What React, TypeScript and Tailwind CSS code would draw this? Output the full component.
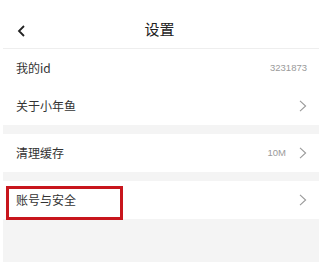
const font = { fontFamily: '"Noto Sans CJK SC", "Noto Sans", sans-serif' };

function Chevron() {
  return (
    <svg width="8" height="12" viewBox="0 0 8 12" fill="none" className="shrink-0">
      <path d="M1 0.8 L6.6 6 L1 11.2" stroke="#9a9a9a" strokeWidth="1.1" />
    </svg>
  );
}

function Row({ label, value, arrow = true, boxed = false }: { label: string; value?: string; arrow?: boolean; boxed?: boolean }) {
  return (
    <div className="relative h-[38px] flex items-center justify-between bg-white pl-[13px] pr-[12px]">
      <span className="text-[12px] text-[#333]">{label}</span>
      <div className="flex items-center gap-[13px]">
        {value && <span className="text-[9.5px] text-[#9a9a9a]" style={{ fontFamily: '"Liberation Sans", sans-serif' }}>{value}</span>}
        {arrow && <Chevron />}
      </div>
      {boxed && (
        <div className="absolute left-[3px] top-[5px] w-[117px] h-[34px] border-[3px] border-[#c8161d]" />
      )}
    </div>
  );
}

export default function App() {
  return (
    <div className="w-[319px] h-[262px] overflow-hidden bg-white pl-[3px] flex flex-col" style={font}>
      {/* Nav bar */}
      <div className="h-[48px] shrink-0 flex items-end pb-[8px] relative bg-white">
        <svg width="9" height="12" viewBox="0 0 9 12" fill="none" className="absolute left-[14px] top-[25px]">
          <path d="M7 1 L2 6 L7 11" stroke="#222" strokeWidth="1.8" />
        </svg>
        <div className="flex-1 text-center text-[15px] text-[#222] -ml-[3px]">设置</div>
      </div>
      <div className="h-px bg-[#eeeeee] shrink-0" />

      <Row label="我的id" value="3231873" arrow={false} />
      <Row label="关于小年鱼" />
      <div className="h-[9px] bg-[#f4f4f4] shrink-0" />
      <Row label="清理缓存" value="10M" />
      <div className="h-[9px] bg-[#f4f4f4] shrink-0" />
      <Row label="账号与安全" boxed />
      <div className="flex-1 bg-[#f4f4f4]" />
    </div>
  );
}
